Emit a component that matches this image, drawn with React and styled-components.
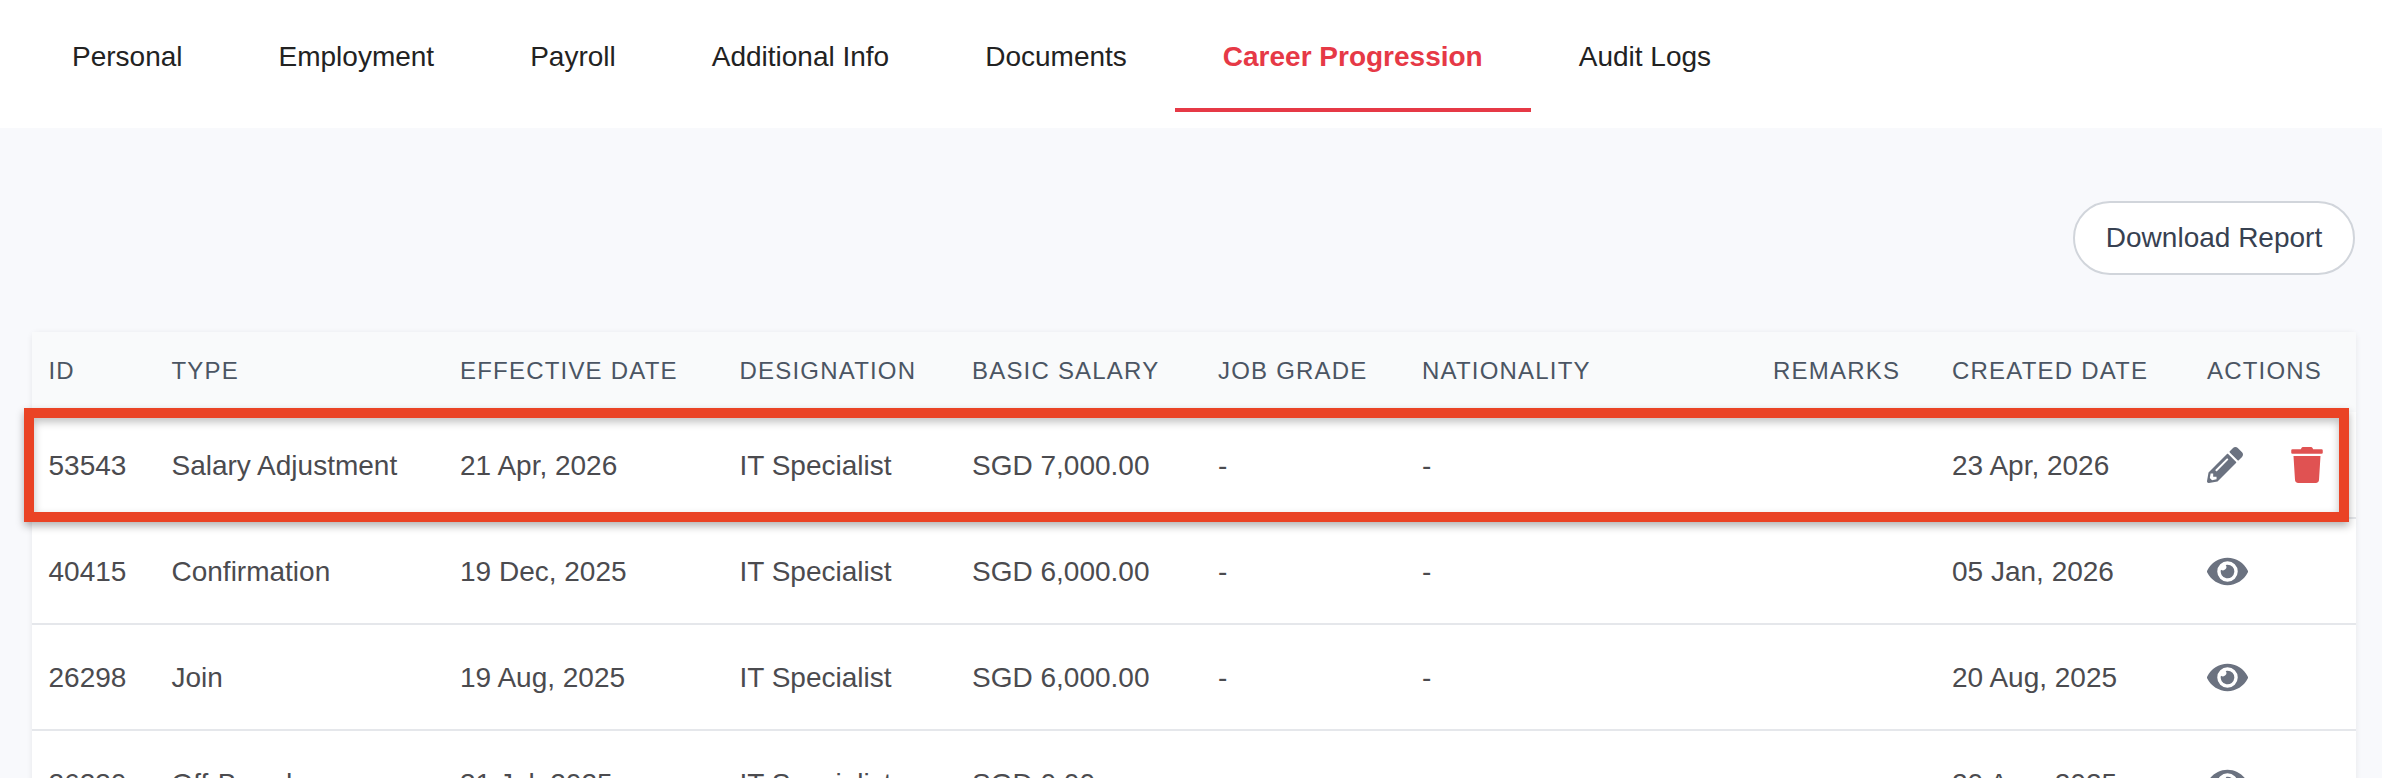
import React from 'react';
import styled, { createGlobalStyle } from 'styled-components';
import { FaPencilAlt, FaTrash, FaEye } from 'react-icons/fa';

const Global = createGlobalStyle`
  html, body { margin: 0; padding: 0; height: 778px; overflow: hidden; background: #f8f9fc; }
  body { font-family: "Liberation Sans", Arial, sans-serif; }
`;
const Page = styled.div`position: relative; height: 778px; overflow: hidden;`;
const TabBar = styled.nav`display: flex; height: 128px; background: #fff; padding-left: 24px; align-items: flex-start;`;
const Tab = styled.div`
  padding: 0 48px; height: 112px; line-height: 114px; box-sizing: border-box; font-size: 28px;
  color: ${p => (p.$active ? '#e63946' : '#222')}; font-weight: ${p => (p.$active ? 700 : 400)};
  border-bottom: 4px solid ${p => (p.$active ? '#e63946' : 'transparent')}; white-space: nowrap;
`;
const Content = styled.main`padding: 73px 26px 0 32px;`;
const Toolbar = styled.div`display: flex; justify-content: flex-end; margin-bottom: 57px; margin-right: 1px;`;
const DownloadButton = styled.button`
  width: 282px; height: 74px; background: #fff; border: 2px solid #d1d5db; border-radius: 37px;
  color: #374151; font: 28px "Liberation Sans", Arial, sans-serif; padding: 0;
`;
const Table = styled.table`
  width: 2324px; table-layout: fixed; border-collapse: collapse; background: #fff;
  box-shadow: 0 1px 6px rgba(0,0,0,.08); border-radius: 6px 6px 0 0;
`;
const HeadRow = styled.tr`height: 80px; background: #f9fafb;`;
const Th = styled.th`
  text-align: left; padding: 0 0 2px 16.5px; font-size: 24px; font-weight: 400; letter-spacing: 1.2px;
  color: #4b5563; text-transform: uppercase; white-space: nowrap;
`;
const Row = styled.tr`height: 106px; border-bottom: 2px solid #e5e7eb;`;
const Td = styled.td`padding: 2px 0 0 16.5px; font-size: 28px; color: #4b4b4f; white-space: nowrap;`;
const Actions = styled.div`display: flex; align-items: center; gap: 46px; margin-top: -2px;`;
const IconSlot = styled.span`display: inline-flex; color: ${p => p.$color};`;
const Highlight = styled.div`
  position: absolute; left: 24px; top: 408px; width: 2325px; height: 114px; box-sizing: border-box;
  border: 10px solid #ea4325; box-shadow: 0 4px 8px rgba(0,0,0,.3), inset 0 4px 8px rgba(0,0,0,.25);
`;

const tabs = ['Personal', 'Employment', 'Payroll', 'Additional Info', 'Documents', 'Career Progression', 'Audit Logs'];
const widths = [123, 288.5, 279.5, 232.5, 246, 204, 351, 179, 255, 165.5];
const heads = ['ID', 'Type', 'Effective Date', 'Designation', 'Basic Salary', 'Job Grade', 'Nationality', 'Remarks', 'Created Date', 'Actions'];
const rows = [
  ['53543', 'Salary Adjustment', '21 Apr, 2026', 'SGD 7,000.00', '23 Apr, 2026', true],
  ['40415', 'Confirmation', '19 Dec, 2025', 'SGD 6,000.00', '05 Jan, 2026', false],
  ['26298', 'Join', '19 Aug, 2025', 'SGD 6,000.00', '20 Aug, 2025', false],
  ['26230', 'Off-Board', '31 Jul, 2025', 'SGD 0.00', '20 Aug, 2025', false],
];

export default function App() {
  return (
    <Page>
      <Global />
      <TabBar>
        {tabs.map(t => <Tab key={t} $active={t === 'Career Progression'}>{t}</Tab>)}
      </TabBar>
      <Content>
        <Toolbar><DownloadButton>Download Report</DownloadButton></Toolbar>
        <Table>
          <colgroup>{widths.map((w, i) => <col key={i} style={{ width: w }} />)}</colgroup>
          <thead><HeadRow>{heads.map(h => <Th key={h}>{h}</Th>)}</HeadRow></thead>
          <tbody>
            {rows.map(r => (
              <Row key={r[0]}>
                <Td>{r[0]}</Td><Td>{r[1]}</Td><Td>{r[2]}</Td><Td>IT Specialist</Td><Td>{r[3]}</Td>
                <Td>-</Td><Td>-</Td><Td></Td><Td>{r[4]}</Td>
                <Td>
                  {r[5] ? (
                    <Actions>
                      <IconSlot $color="#6b7280"><FaPencilAlt size={36} /></IconSlot>
                      <IconSlot $color="#e05252"><FaTrash size={36} /></IconSlot>
                    </Actions>
                  ) : (
                    <Actions><IconSlot $color="#6b7280"><FaEye size={41} /></IconSlot></Actions>
                  )}
                </Td>
              </Row>
            ))}
          </tbody>
        </Table>
      </Content>
      <Highlight />
    </Page>
  );
}
